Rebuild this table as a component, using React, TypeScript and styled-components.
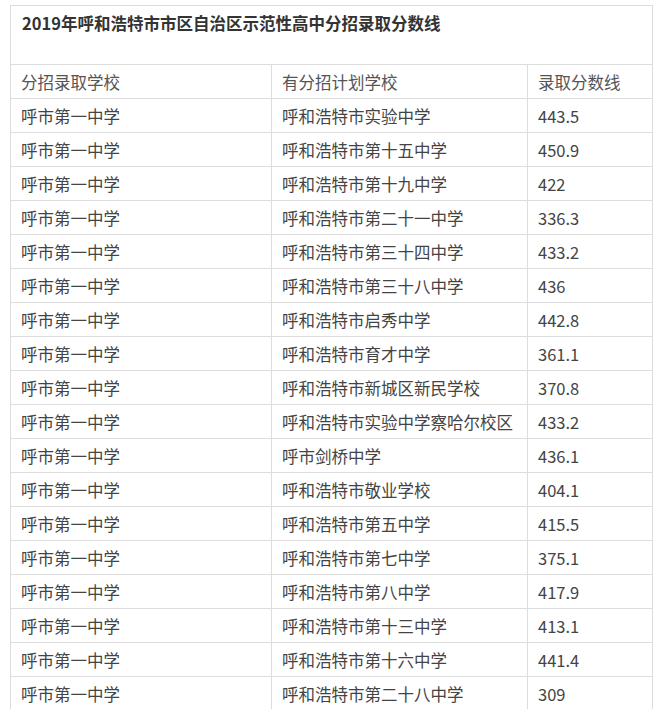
import React, { FC } from 'react'
import styled, { createGlobalStyle } from 'styled-components'

const GlobalStyle = createGlobalStyle`
  html, body {
    margin: 0;
    padding: 0;
    background: #ffffff;
  }
  body {
    font-family: "Noto Sans CJK SC", "Microsoft YaHei", sans-serif;
  }
`

const BORDER = '#dddddd'

const StyledPage = styled.div`
  padding: 5px 0 0 10px;
  width: 665px;
  height: 709px;
  box-sizing: border-box;
  overflow: hidden;
`
const StyledTable = styled.div`
  display: grid;
  grid-template-columns: 261px 256px 125px;
  width: 643px;
  box-sizing: border-box;
  border-left: 1px solid ${BORDER};
  border-top: 1px solid ${BORDER};
`
const StyledTitle = styled.div`
  grid-column: 1 / -1;
  height: 59px;
  box-sizing: border-box;
  padding: 5px 10px 0 11px;
  border-right: 1px solid ${BORDER};
  border-bottom: 1px solid ${BORDER};
  color: #333333;
  font-size: 16.5px;
  font-weight: 700;
  line-height: 24px;
`
const StyledCell = styled.div<{ $head?: boolean }>`
  display: flex;
  align-items: center;
  height: 34px;
  box-sizing: border-box;
  padding: 0 0 0 10px;
  border-right: 1px solid ${BORDER};
  border-bottom: 1px solid ${BORDER};
  color: ${(p) => (p.$head ? '#555555' : '#444444')};
  font-size: 16.5px;
  white-space: nowrap;
`

const rows: [string, string, string][] = [
  ['呼市第一中学', '呼和浩特市实验中学', '443.5'],
  ['呼市第一中学', '呼和浩特市第十五中学', '450.9'],
  ['呼市第一中学', '呼和浩特市第十九中学', '422'],
  ['呼市第一中学', '呼和浩特市第二十一中学', '336.3'],
  ['呼市第一中学', '呼和浩特市第三十四中学', '433.2'],
  ['呼市第一中学', '呼和浩特市第三十八中学', '436'],
  ['呼市第一中学', '呼和浩特市启秀中学', '442.8'],
  ['呼市第一中学', '呼和浩特市育才中学', '361.1'],
  ['呼市第一中学', '呼和浩特市新城区新民学校', '370.8'],
  ['呼市第一中学', '呼和浩特市实验中学察哈尔校区', '433.2'],
  ['呼市第一中学', '呼市剑桥中学', '436.1'],
  ['呼市第一中学', '呼和浩特市敬业学校', '404.1'],
  ['呼市第一中学', '呼和浩特市第五中学', '415.5'],
  ['呼市第一中学', '呼和浩特市第七中学', '375.1'],
  ['呼市第一中学', '呼和浩特市第八中学', '417.9'],
  ['呼市第一中学', '呼和浩特市第十三中学', '413.1'],
  ['呼市第一中学', '呼和浩特市第十六中学', '441.4'],
  ['呼市第一中学', '呼和浩特市第二十八中学', '309'],
]

const App: FC = () => {
  return (
    <StyledPage>
      <GlobalStyle />
      <StyledTable>
        <StyledTitle>2019年呼和浩特市市区自治区示范性高中分招录取分数线</StyledTitle>

        <StyledCell $head>分招录取学校</StyledCell>
        <StyledCell $head>有分招计划学校</StyledCell>
        <StyledCell $head>录取分数线</StyledCell>

        {rows.map(([school, plan, score], i) => (
          <React.Fragment key={i}>
            <StyledCell>{school}</StyledCell>
            <StyledCell>{plan}</StyledCell>
            <StyledCell>{score}</StyledCell>
          </React.Fragment>
        ))}
      </StyledTable>
    </StyledPage>
  )
}

export default App
